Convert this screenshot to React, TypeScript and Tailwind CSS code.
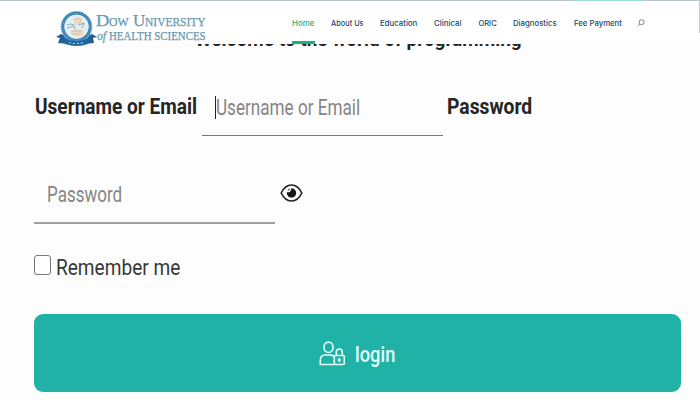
import { useLayoutEffect, useRef, useState } from "react";

// Condenses or stretches a line of text to fill the width of its box.
function FitText({ text, className = "" }: { text: string; className?: string }) {
  const box = useRef<HTMLSpanElement>(null);
  const line = useRef<HTMLSpanElement>(null);
  const [scale, setScale] = useState(1);
  useLayoutEffect(() => {
    if (box.current && line.current) {
      setScale(box.current.clientWidth / line.current.offsetWidth);
    }
  }, [text]);
  return (
    <span ref={box} className={`block shrink-0 whitespace-nowrap ${className}`}>
      <span ref={line} className="inline-block origin-left" style={{ transform: `scaleX(${scale})` }}>
        {text}
      </span>
    </span>
  );
}

const links = [
  { text: "Home", box: "w-[22px] text-[#1cb17c]" },
  { text: "About Us", box: "w-[33px]" },
  { text: "Education", box: "w-[37px]" },
  { text: "Clinical", box: "w-[28px]" },
  { text: "ORIC", box: "w-[18px]" },
  { text: "Diagnostics", box: "w-[44px]" },
  { text: "Fee Payment", box: "w-[48px]" },
];

function Emblem() {
  return (
    <svg className="block h-[35px] w-[41px] shrink-0" viewBox="0 0 41 35">
      <path d="M5 23 0 26l4 1-2 5 10 1 3-6zM36 23l5 3-4 1 1 5-9 1-3-6z" fill="#235f96" />
      <circle cx="20.5" cy="15.7" r="15.5" fill="#e5f2f7" stroke="#65a9cc" strokeWidth=".7" />
      <circle cx="20.5" cy="15.7" r="13.6" fill="none" stroke="#2f79ad" strokeWidth="2.8" />
      <circle cx="20.5" cy="15.7" r="13.6" fill="none" stroke="#86bfdc" strokeWidth="1" strokeDasharray="1.2 1.2" />
      <circle cx="20.5" cy="15.7" r="11.8" fill="#e3eef2" />
      <path d="M18 8q5-4 8 0l-1 6-6 1zM15 20l5-2 6 1 2 4q-6 5-13 0z" fill="#ecdcc4" />
      <path d="m18 9 3-2 4 2-2 5M15 20h11M16 23h9" stroke="#d0b59b" strokeWidth=".8" fill="none" />
      <path d="M11 14q4-2 7 0m-7 3 7-2 1 3M23 14l5-2-2 5" stroke="#739aab" strokeWidth=".8" fill="none" />
      <path d="M7 26q13 8 27 0l-2 7q-11 4-23 0z" fill="#1d679e" />
      <path d="M13 31.5q7 2 15 0" stroke="#9bcce1" strokeWidth="1.3" strokeDasharray="2 2" fill="none" />
    </svg>
  );
}

function Header() {
  return (
    <header className="relative z-10 h-[44px] border-t border-[#bac6ca] bg-white">
      <div className="flex h-[43px] pl-[56px]">
        <div className="flex pt-[10px]">
          <Emblem />
          <div className="-ml-px w-[111px] pt-px font-['Liberation_Serif',serif] text-[#6b9eb5] [-webkit-text-stroke:0.25px_#5b8da5]">
            <div className="flex h-[16px] items-baseline gap-[4px] leading-[17px]">
              <span className="flex items-baseline">
                <FitText text="D" className="w-[13px] text-[17px]" />
                <FitText text="OW" className="w-[20px] text-[13px]" />
              </span>
              <span className="flex items-baseline">
                <FitText text="U" className="w-[12px] text-[17px]" />
                <FitText text="NIVERSITY" className="w-[61px] text-[13px]" />
              </span>
            </div>
            <div className="flex h-[15px] items-baseline gap-[3px] leading-[15px]">
              <FitText text="of" className="ml-px w-[9px] text-[13px] italic" />
              <FitText text="HEALTH SCIENCES" className="w-[97px] text-[12px]" />
            </div>
          </div>
        </div>
        <nav className="ml-[85px] flex gap-[16.6px] pt-[16px] font-[Inter,sans-serif] text-[7.6px] leading-[13px] font-medium text-[#24486f]">
          {links.map((link) => (
            <div key={link.text} className="h-[27px] shrink-0">
              <FitText text={link.text} className={link.box} />
              {link.text === "Home" && <div className="-mr-px mt-[11px] h-[3px] bg-[#1cb17c]" />}
            </div>
          ))}
          <svg className="-ml-px mt-[2px] h-[8px] w-[8px]" viewBox="0 0 8 8" fill="none" stroke="#526b80" strokeWidth=".8">
            <circle cx="4.6" cy="3.2" r="2.5" />
            <path d="M2.8 5 .5 7.3" />
          </svg>
        </nav>
      </div>
      <div className="absolute -top-px left-[573px] h-px w-[71px] bg-[#9edbd5]" />
      <div className="absolute -top-px right-0 h-[33px] w-px bg-[#c2cace]" />
    </header>
  );
}

export default function App() {
  return (
    <div className="h-[400px] w-[700px] overflow-hidden bg-[#fdfdfd] font-[Roboto,sans-serif] text-[#252525]">
      <Header />
      <main>
        <h1 className="-mt-[15px] flex h-[37px] pl-[195px] text-[18px] leading-[22px] font-bold">
          <FitText text="Welcome to the world of programming" className="w-[327px]" />
        </h1>
        <div className="flex h-[70px] pl-[35px] text-[22px] leading-[28px]">
          <FitText text="Username or Email" className="mt-[27px] w-[162px] font-bold" />
          <div className="ml-[5px] flex h-[70px] w-[241px] border-b border-[#777] bg-[#fdfdfd] pl-[13px]">
            <div className="mt-[30px] h-[23px] w-px bg-[#222]" />
            <FitText text="Username or Email" className="mt-[28px] w-[144px] text-[#858585]" />
          </div>
          <FitText text="Password" className="mt-[27px] ml-[4px] w-[85px] font-bold" />
        </div>
        <div className="flex h-[88px] pl-[34px] text-[22px] leading-[28px]">
          <div className="h-[88px] w-[241px] border-b-2 border-[#a0a0a0] pl-[13px] pt-[45px]">
            <FitText text="Password" className="w-[75px] text-[#858585]" />
          </div>
          <svg className="mt-[47px] ml-[5px] h-[20px] w-[23px]" viewBox="0 0 23 20">
            <path d="M1.2 10Q5 2 11.5 2T21.8 10Q18 18 11.5 18T1.2 10Z" fill="white" stroke="#222" strokeWidth="1.7" />
            <circle cx="11.5" cy="10" r="4.7" fill="#171717" />
            <path d="M7 8.5Q10.5 9 10.7 5" stroke="white" strokeWidth="1.5" fill="none" />
          </svg>
        </div>
        <div className="flex h-[90px] pt-[29px] pl-[34px] text-[22px] leading-[28px]">
          <div className="mt-[2px] h-[20px] w-[17px] rounded-[3px] border border-[#777] bg-white" />
          <FitText text="Remember me" className="mt-px ml-[5px] w-[124px] text-[#383838]" />
        </div>
        <button className="ml-[34px] flex h-[78px] w-[647px] items-center rounded-[9px] bg-[#20b2a6] pl-[285px] text-[22px] text-[#e2fffc]">
          <svg className="mt-[1px] h-[25px] w-[27px] shrink-0" viewBox="0 0 27 25" fill="none" stroke="currentColor" strokeWidth="1.6">
            <ellipse cx="9.5" cy="6.3" rx="4.6" ry="5.2" />
            <path d="M15 23.5H1.3v-4Q1.3 14 6 14h6.5l2.5 1.5" />
            <rect x="15.3" y="14.5" width="10" height="9" rx="1" />
            <path d="M17.3 14.5v-3.2q0-3.3 3-3.3t3 3.3v3.2M20.3 17v4m-1.6-2h3.2" />
          </svg>
          <FitText text="login" className="mt-[3px] ml-[9px] w-[40px] text-left leading-[26px] font-medium" />
        </button>
      </main>
    </div>
  );
}
